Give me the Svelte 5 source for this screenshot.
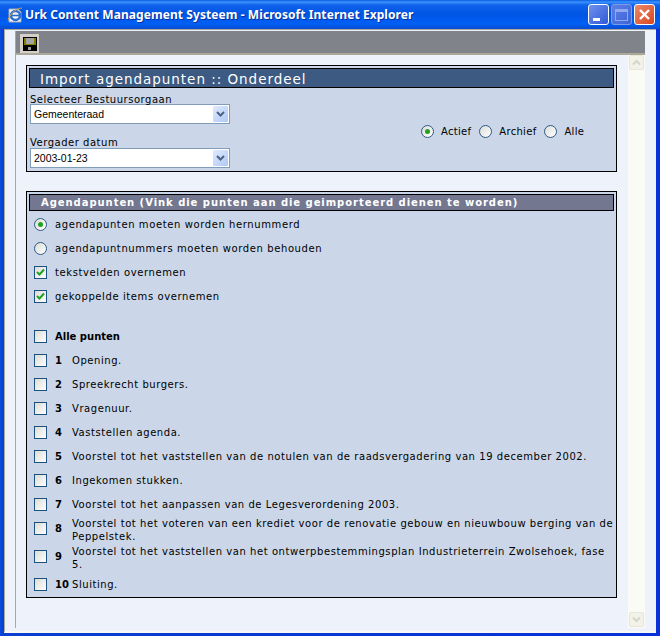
<script>
  const items = [
    ['1','Opening.'],['2','Spreekrecht burgers.'],['3','Vragenuur.'],['4','Vaststellen agenda.'],
    ['5','Voorstel tot het vaststellen van de notulen van de raadsvergadering van 19 december 2002.'],
    ['6','Ingekomen stukken.'],['7','Voorstel tot het aanpassen van de Legesverordening 2003.'],
    ['8','Voorstel tot het voteren van een krediet voor de renovatie gebouw en nieuwbouw berging van de Peppelstek.',true],
    ['9','Voorstel tot het vaststellen van het ontwerpbestemmingsplan Industrieterrein Zwolsehoek, fase 5.',true],
    ['10','Sluiting.']
  ];
</script>

{#snippet radio(on)}
  <span class="radio">{#if on}<span class="dot"></span>{/if}</span>
{/snippet}
{#snippet check(on)}
  <span class="check">{#if on}<svg width="9" height="9" viewBox="0 0 9 9"><path d="M1 4l2.5 2.5L8 1.5" fill="none" stroke="#21a121" stroke-width="2"/></svg>{/if}</span>
{/snippet}
{#snippet select(value)}
  <div class="select"><span class="val">{value}</span><span class="arrow"><svg width="9" height="7" viewBox="0 0 9 7"><path d="M1 1l3.5 3.5L8 1" fill="none" stroke="#4d6185" stroke-width="2"/></svg></span></div>
{/snippet}

<div class="win">
  <header class="titlebar">
    <svg class="ie" width="18" height="18" viewBox="0 0 18 18">
      <path d="M3 3h9l3 3v10H3z" fill="#f6f6f6" stroke="#a0a8b0" stroke-width="1"/>
      <circle cx="9.5" cy="9.5" r="4.5" fill="none" stroke="#2a6fd0" stroke-width="2.6"/>
      <path d="M5.5 9.5h8" stroke="#2a6fd0" stroke-width="1.6"/>
      <path d="M2 14C5 6 12 2 16 2" fill="none" stroke="#e0a030" stroke-width="1"/>
    </svg>
    <span class="ttl">Urk Content Management Systeem - Microsoft Internet Explorer</span>
    <div class="btns">
      <span class="wb min"><i></i></span>
      <span class="wb max"><i></i></span>
      <span class="wb close"><svg width="13" height="13" viewBox="0 0 13 13"><path d="M2 2l9 9M11 2l-9 9" stroke="#fff" stroke-width="2.4"/></svg></span>
    </div>
  </header>
  <div class="client">
    <div class="page">
      <div class="toolbar">
        <span class="save"><svg width="16" height="16" viewBox="0 0 16 16"><path d="M1 1h14v14H1z" fill="#000"/><path d="M2 2h12v7H2z" fill="#808000"/><path d="M4 2h8v6H4z" fill="#a3a3a3"/><path d="M5 10h7v5H5z" fill="#000"/><path d="M6 11h3v3H6z" fill="#9a9a9a"/></svg></span>
      </div>
      <div class="body">
        <main class="content">
          <section class="panel top">
            <h1>Import agendapunten :: Onderdeel</h1>
            <div class="filter">
              <div class="fields">
                <span class="lab">Selecteer Bestuursorgaan</span>
                {@render select('Gemeenteraad')}
                <span class="lab second">Vergader datum</span>
                {@render select('2003-01-23')}
              </div>
              <div class="radios">
                {@render radio(true)}<span>Actief</span>
                {@render radio(false)}<span>Archief</span>
                {@render radio(false)}<span>Alle</span>
              </div>
            </div>
          </section>
          <section class="panel list">
            <h2>Agendapunten (Vink die punten aan die geimporteerd dienen te worden)</h2>
            <div class="row">{@render radio(true)}<span class="txt">agendapunten moeten worden hernummerd</span></div>
            <div class="row">{@render radio(false)}<span class="txt">agendapuntnummers moeten worden behouden</span></div>
            <div class="row">{@render check(true)}<span class="txt">tekstvelden overnemen</span></div>
            <div class="row">{@render check(true)}<span class="txt">gekoppelde items overnemen</span></div>
            <div class="row all">{@render check(false)}<b class="txt">Alle punten</b></div>
            {#each items as [n, t, two]}
              <div class="row" class:two>{@render check(false)}<b class="num">{n}</b><span class="t2">{t}</span></div>
            {/each}
          </section>
        </main>
        <aside class="scroll">
          <span class="sb"><svg width="9" height="7" viewBox="0 0 9 7"><path d="M1 5.5L4.5 2 8 5.5" fill="none" stroke="#d4d6c8" stroke-width="2"/></svg></span>
          <span class="sb"><svg width="9" height="7" viewBox="0 0 9 7"><path d="M1 1.5L4.5 5 8 1.5" fill="none" stroke="#d4d6c8" stroke-width="2"/></svg></span>
        </aside>
      </div>
    </div>
  </div>
</div>

<style>
  :global(body) { margin: 0; background: #0831d9; }
  .win { width: 660px; height: 636px; display: flex; flex-direction: column; overflow: hidden; background: linear-gradient(90deg,#0a4be0,#0a3fd0 3px,#0831d9); font-family: "DejaVu Sans", Verdana, sans-serif; font-size: 10px; color: #000; }
  .titlebar { height: 29px; flex: none; display: flex; align-items: center; padding: 0 5px 0 6px; box-sizing: border-box; background: linear-gradient(180deg,#0a5ae0 0,#3a93ff 2px,#0f62ea 5px,#0055e5 14px,#0060f5 24px,#0a4fd5 28px); }
  .ie { margin-right: 1px; }
  .ttl { flex: 1; color: #fff; font: bold 12px "Noto Sans", sans-serif; letter-spacing: .07px; text-shadow: 1px 1px #0a2fa0; white-space: nowrap; }
  .btns { display: flex; gap: 2px; }
  .wb { width: 21px; height: 21px; box-sizing: border-box; border: 1px solid #fff; border-radius: 3px; display: flex; align-items: center; justify-content: center; }
  .min { background: linear-gradient(135deg,#6f91ee,#3159d6); align-items: flex-end; justify-content: flex-start; }
  .min i { display: block; width: 7px; height: 3px; background: #fff; margin: 0 0 3px 4px; }
  .max { background: linear-gradient(135deg,#5d7fe6,#3d64d8); border-color: #7f9be8; }
  .max i { display: block; width: 13px; height: 12px; box-sizing: border-box; border: 1px solid #8fa8ee; border-top-width: 3px; }
  .close { background: linear-gradient(135deg,#eb8a6c,#d8461f); }
  .client { flex: 1; min-height: 0; margin: 0 4px 3px; padding: 1px 11px 3px 10px; border-top: 1px solid #aca899; border-left: 1px solid #aca899; border-bottom: 2px solid #f8f8f4; box-sizing: border-box; background: #eef2fb; display: flex; }
  .page { flex: 1; min-width: 0; border-left: 1px solid #aca899; display: flex; flex-direction: column; background: #eef2fb; }
  .toolbar { height: 22px; flex: none; background: #80838a; border-bottom: 2px solid #aca899; }
  .save { width: 19px; height: 19px; margin-left: 4px; margin-top: 3px; box-sizing: border-box; background: #d4d0c8; display: flex; align-items: center; justify-content: center; }
  .body { flex: 1; display: flex; min-height: 0; }
  .content { flex: 1; padding: 10px 10px 0 10px; min-width: 0; }
  .scroll { width: 17px; flex: none; box-sizing: border-box; background: #fbfbf6; display: flex; flex-direction: column; justify-content: space-between; align-items: center; padding: 0 0 1px; }
  .sb { width: 15px; height: 15px; background: #f2f2e8; border: 1px solid #e6e6da; border-radius: 2px; box-sizing: border-box; display: flex; align-items: center; justify-content: center; }
  .panel { border: 1px solid #000; background: #cbd7e9; width: 591px; box-sizing: border-box; }
  .top { height: 107px; padding: 2px; }
  h1 { margin: 0; height: 20px; box-sizing: border-box; border: 1px solid #000; background: #3c5a82; color: #fff; font-size: 13.5px; font-weight: normal; letter-spacing: .97px; line-height: 20px; padding-left: 10px; white-space: nowrap; }
  .filter { display: flex; }
  .fields { width: 200px; margin-left: 1px; }
  .lab { display: block; letter-spacing: .52px; line-height: 13px; margin-top: 5px; height: 11px; }
  .second { margin-top: 13px; line-height: 11px; }
  .select { width: 200px; height: 20px; box-sizing: border-box; border: 1px solid #7f9db9; background: #fff; display: flex; align-items: center; font: 10.5px "Liberation Sans", sans-serif; }
  .val { flex: 1; padding-left: 3px; }
  .arrow { width: 15px; height: 16px; margin-right: 1px; background: linear-gradient(135deg,#e1eafe,#aec8f7); display: flex; align-items: center; justify-content: center; border-radius: 1px; }
  .radios { display: flex; align-items: center; margin-left: 191px; height: 14px; margin-top: 36px; letter-spacing: .3px; }
  .radios span:not(.radio):not(.dot) { margin: 0 8px 0 7px; }
  .radio { width: 13px; height: 13px; border: 1px solid #2f5a85; border-radius: 50%; box-sizing: border-box; background: linear-gradient(135deg,#dcdcd6,#fff); display: inline-flex; align-items: center; justify-content: center; flex: none; }
  .dot { width: 5px; height: 5px; border-radius: 50%; background: #21a121; }
  .check { width: 13px; height: 13px; border: 1px solid #1c5180; box-sizing: border-box; background: linear-gradient(135deg,#dcdcd6,#fff); display: inline-flex; align-items: center; justify-content: center; flex: none; }
  .list { margin-top: 19px; height: 407px; padding: 2px; }
  h2 { margin: 0 0 1px; height: 17px; box-sizing: border-box; border: 1px solid #000; background: #747790; color: #fff; font-size: 10px; font-weight: bold; letter-spacing: .95px; line-height: 15px; padding-left: 11px; white-space: nowrap; }
  .row { display: flex; align-items: center; height: 24px; padding-left: 5px; letter-spacing: .6px; line-height: 13px; }
  .row.two { height: 28px; }
  .row.two :global(.check) { margin-top: -4px; }
  .row.two .num { margin-top: -4px; }
  .all { margin-top: 16px; }
  .txt { margin-left: 8px; }
  b { letter-spacing: 0; }
  .num { margin-left: 8px; width: 17px; flex: none; }
  .t2 { width: 544px; letter-spacing: .56px; }
</style>
